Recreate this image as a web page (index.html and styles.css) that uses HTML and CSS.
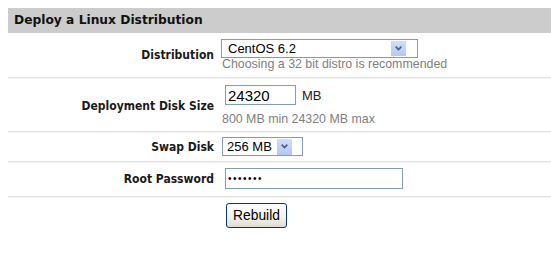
FILE: index.html
```html
<!DOCTYPE html>
<html>
<head>
<meta charset="utf-8">
<title>Deploy a Linux Distribution</title>
<link rel="stylesheet" href="styles.css">
</head>
<body>
<div class="panel">
  <div class="panel-title">Deploy a Linux Distribution</div>

  <div class="row row-dist">
    <div class="label">Distribution</div>
    <div class="field">
      <div class="select select-wide">
        <span class="select-value">CentOS 6.2</span>
        <span class="select-btn"><svg width="7" height="5" viewBox="0 0 7 5"><path d="M0.7 0.7 L3.5 3.6 L6.3 0.7" fill="none" stroke="#4a5d8c" stroke-width="1.7"/></svg></span>
      </div>
      <div class="hint">Choosing a 32 bit distro is recommended</div>
    </div>
  </div>

  <div class="row row-disk">
    <div class="label">Deployment Disk Size</div>
    <div class="field">
      <div class="inline">
        <input class="text-input size-input" type="text" value="24320">
        <span class="unit">MB</span>
      </div>
      <div class="hint hint-spaced">800 MB min 24320 MB max</div>
    </div>
  </div>

  <div class="row row-swap">
    <div class="label">Swap Disk</div>
    <div class="field">
      <div class="select select-small">
        <span class="select-value">256 MB</span>
        <span class="select-btn"><svg width="7" height="5" viewBox="0 0 7 5"><path d="M0.7 0.7 L3.5 3.6 L6.3 0.7" fill="none" stroke="#4a5d8c" stroke-width="1.7"/></svg></span>
      </div>
    </div>
  </div>

  <div class="row row-pass">
    <div class="label">Root Password</div>
    <div class="field">
      <input class="text-input pass-input" type="password" value="1234567">
    </div>
  </div>

  <div class="row row-submit">
    <div class="label"></div>
    <div class="field">
      <button class="btn" type="button">Rebuild</button>
    </div>
  </div>
</div>
</body>
</html>
```

FILE: styles.css
```css
html, body {
  background: #ffffff;
}
body {
  margin: 8px 0 0 8px;
  font-family: "Liberation Sans", Arial, sans-serif;
  color: #000;
}
.panel {
  display: flex;
  flex-direction: column;
}
.panel-title {
  height: 25px;
  line-height: 25px;
  background: #cccccc;
  padding-left: 6px;
  font-family: "DejaVu Sans", Verdana, sans-serif;
  font-weight: bold;
  font-size: 12.25px;
  color: #111;
}
.row {
  display: flex;
  align-items: center;
  border-bottom: 1px solid #e2e2e2;
  box-shadow: 0 1px 0 #f4f4f4;
}
.row-dist { padding: 6px 0 6px; }
.row-disk { padding: 7px 0 5px; }
.row-swap { padding: 5px 0 5px; }
.row-pass { padding: 6px 0 7px; }
.row-submit { padding: 6px 0 0; border-bottom: none; box-shadow: none; }

.label {
  width: 206px;
  flex: none;
  text-align: right;
  font-family: "DejaVu Sans Condensed", "DejaVu Sans", sans-serif;
  font-weight: bold;
  font-size: 12px;
  color: #1a1a1a;
}
.field {
  margin-left: 7px;
  display: flex;
  flex-direction: column;
  align-items: flex-start;
}
.select {
  box-sizing: border-box;
  height: 19px;
  border: 1px solid #7f9db9;
  background: #fff;
  display: flex;
  align-items: center;
  font-size: 13px;
  color: #000;
}
.select-value {
  padding-left: 6px;
}
.select-btn {
  margin-left: auto;
  width: 15px;
  height: 15px;
  background: linear-gradient(#d0ddfb, #b4c8f5);
  display: flex;
  align-items: center;
  justify-content: center;
}
.select-wide { width: 197px; }
.select-wide .select-btn { margin-right: 11px; }
.select-small { width: 81px; margin-left: 1px; }
.select-small .select-value { padding-left: 4px; }
.select-small .select-btn { margin-right: 10px; height: 16px; }

.hint {
  margin-left: 1px;
  font-size: 12.4px;
  line-height: 13px;
  color: #808080;
}
.hint-spaced { margin-top: 8px; }

.inline {
  display: flex;
  align-items: center;
}
.text-input {
  box-sizing: border-box;
  margin: 0;
  border: 1px solid #7f9db9;
  background: #fff;
  font-family: "Liberation Sans", Arial, sans-serif;
  color: #000;
  outline: none;
}
.size-input {
  margin-left: 4px;
  width: 71px;
  height: 20px;
  padding: 0 2px;
  font-size: 15px;
}
.unit {
  margin-left: 6px;
  font-size: 13px;
  color: #222;
}
.pass-input {
  margin-left: 4px;
  width: 178px;
  height: 21px;
  padding: 0 2px;
  font-size: 10px;
  letter-spacing: 1.5px;
}
.btn {
  margin: 0 0 0 5px;
  box-sizing: border-box;
  width: 61px;
  height: 25px;
  padding: 0;
  border: 1px solid #003c74;
  border-radius: 3px;
  background: linear-gradient(#ffffff, #f4f3ee 55%, #dedbd0);
  font-family: "Liberation Sans", Arial, sans-serif;
  font-size: 13.8px;
  color: #000;
}
```
